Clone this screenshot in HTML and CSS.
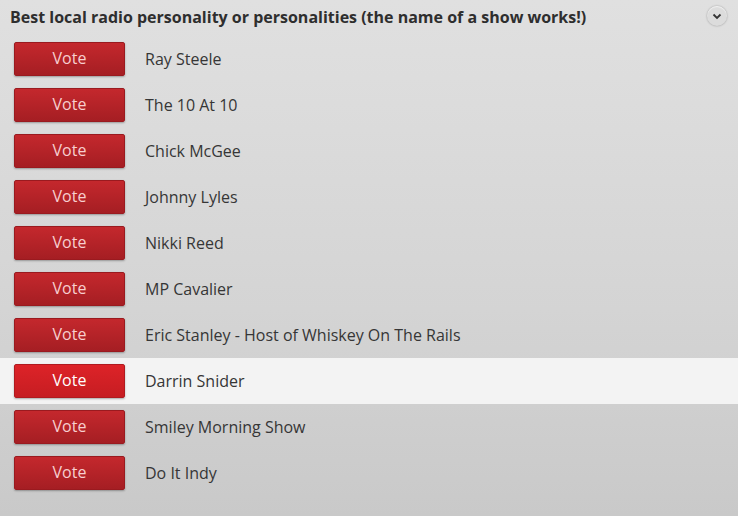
FILE: index.html
```html
<!DOCTYPE html>
<html lang="en">
<head>
  <meta charset="UTF-8">
  <title>Best local radio personality</title>
  <link rel="stylesheet" href="styles.css">
</head>
<body>
  <div class="poll">
    <div class="poll-head">
      <h3>Best local radio personality or personalities (the name of a show works!)</h3>
      <span class="toggle">
        <svg width="10" height="7" viewBox="0 0 10 7"><path d="M1.5 1.5 L5 5 L8.5 1.5" fill="none" stroke="#333" stroke-width="1.8"/></svg>
      </span>
    </div>
    <div class="options">
      <div class="option"><button class="vote">Vote</button><span class="name">Ray Steele</span></div>
      <div class="option"><button class="vote">Vote</button><span class="name">The 10 At 10</span></div>
      <div class="option"><button class="vote">Vote</button><span class="name">Chick McGee</span></div>
      <div class="option"><button class="vote">Vote</button><span class="name">Johnny Lyles</span></div>
      <div class="option"><button class="vote">Vote</button><span class="name">Nikki Reed</span></div>
      <div class="option"><button class="vote">Vote</button><span class="name">MP Cavalier</span></div>
      <div class="option"><button class="vote">Vote</button><span class="name">Eric Stanley - Host of Whiskey On The Rails</span></div>
      <div class="option active"><button class="vote">Vote</button><span class="name">Darrin Snider</span></div>
      <div class="option"><button class="vote">Vote</button><span class="name">Smiley Morning Show</span></div>
      <div class="option"><button class="vote">Vote</button><span class="name">Do It Indy</span></div>
    </div>
  </div>
</body>
</html>
```
FILE: styles.css
```css
html, body {
  margin: 0;
  height: 100%;
}
body {
  font-family: "Open Sans", Arial, sans-serif;
  color: #333;
  background: linear-gradient(to bottom, #e0e0e0 0%, #d4d4d4 60%, #c9c9c9 100%);
}
.poll-head {
  display: flex;
  align-items: center;
  justify-content: space-between;
  height: 36px;
  padding: 0 11px 0 10px;
}
.poll-head h3 {
  margin: 0;
  font-size: 16px;
  font-weight: 700;
  color: #2e2e2e;
  padding-bottom: 3px;
}
.toggle {
  width: 20px;
  height: 20px;
  border-radius: 50%;
  background: #dcdcdc;
  box-shadow: 0 0 2px rgba(0, 0, 0, 0.35), inset 0 1px 1px #f2f2f2;
  display: flex;
  align-items: center;
  justify-content: center;
  margin-bottom: 4px;
}
.option {
  display: flex;
  align-items: center;
  height: 46px;
  padding-left: 14px;
}
.option.active {
  background: #f3f3f3;
}
.vote {
  width: 111px;
  height: 34px;
  margin-bottom: 1px;
  border: 1px solid #9a1a1f;
  border-radius: 2px;
  background: linear-gradient(to bottom, #c4282d, #a51e23);
  box-shadow: 0 1px 2px rgba(0, 0, 0, 0.3);
  color: #f7cfcf;
  font-family: "Open Sans", Arial, sans-serif;
  font-size: 16px;
  padding: 0 0 1px;
  cursor: pointer;
}
.option.active .vote {
  background: linear-gradient(to bottom, #dd2328, #c61d22);
  border-color: #b01a1f;
  color: #fff;
}
.name {
  margin-left: 20px;
  font-size: 16px;
  color: #363636;
}
```
